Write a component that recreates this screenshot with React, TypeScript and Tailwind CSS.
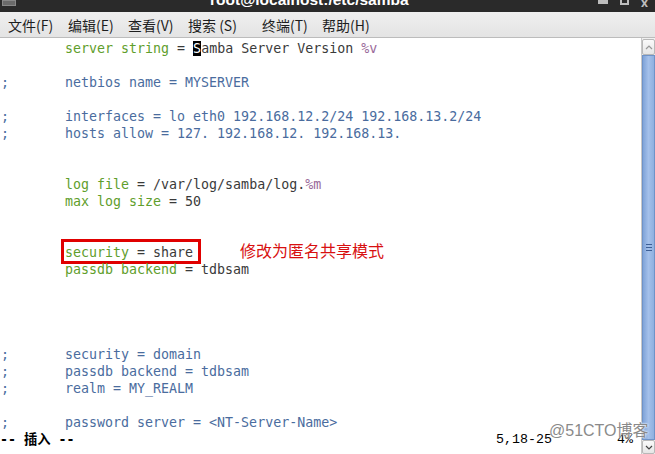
import React from "react";

const G = "text-[#5f9e2c]"; // green keys
const B = "text-[#4a6c9e]"; // blue comments
const D = "text-[#3a3a3a]"; // dark values
const P = "text-[#9a6a9a]"; // purple macros

type Seg = [string, string];
type Line = { semi?: boolean; segs?: Seg[]; box?: boolean };

const lines: Line[] = [
  { segs: [["server string", G], [" = ", D], ["CURSOR", D], ["amba Server Version ", D], ["%v", P]] },
  {},
  { semi: true, segs: [["netbios name = MYSERVER", B]] },
  {},
  { semi: true, segs: [["interfaces = lo eth0 192.168.12.2/24 192.168.13.2/24", B]] },
  { semi: true, segs: [["hosts allow = 127. 192.168.12. 192.168.13.", B]] },
  {},
  {},
  { segs: [["log file", G], [" = /var/log/samba/log.", D], ["%m", P]] },
  { segs: [["max log size", G], [" = 50", D]] },
  {},
  {},
  { box: true, segs: [["security", G], [" = share", D]] },
  { segs: [["passdb backend", G], [" = tdbsam", D]] },
  {},
  {},
  {},
  {},
  { semi: true, segs: [["security = domain", B]] },
  { semi: true, segs: [["passdb backend = tdbsam", B]] },
  { semi: true, segs: [["realm = MY_REALM", B]] },
  {},
  { semi: true, segs: [["password server = <NT-Server-Name>", B]] },
];

const menus = ["文件(F)", "编辑(E)", "查看(V)", "搜索 (S)", "终端(T)", "帮助(H)"];
const menuX = [8, 68, 128, 188, 262, 322];

export default function App() {
  return (
    <div className="relative w-[655px] h-[454px] overflow-hidden bg-white flex flex-col">
      {/* title bar */}
      <div className="relative h-[12px] bg-[#2a2a2a] overflow-hidden shrink-0">
        <div className="absolute left-[2px] top-0 w-[14px] h-[6px] bg-[#6a6a6a] border border-[#888]" />
        <div
          className="absolute left-[210px] top-[-10px] text-white font-bold text-[15.5px] leading-[20px] whitespace-nowrap"
          style={{ fontFamily: '"Liberation Sans", sans-serif' }}
        >
          root@localhost:/etc/samba
        </div>
        <div className="absolute left-[598px] top-0 w-[10px] h-[4px] bg-[#bdbdbd]" />
        <div className="absolute left-[620px] top-[-4px] w-[9px] h-[9px] border-2 border-[#bdbdbd]" />
        <div className="absolute left-[641px] top-[-2px] text-[#bdbdbd] text-[12px] leading-[10px] font-bold">x</div>
      </div>
      {/* menu bar */}
      <div
        className="relative h-[26px] shrink-0 bg-gradient-to-b from-[#efefef] to-[#e4e4e4] border-b border-[#bcbcbc] text-[14px] text-[#1e1e1e]"
        style={{ fontFamily: '"Noto Sans CJK SC", "DejaVu Sans", sans-serif' }}
      >
        {menus.map((m, i) => (
          <span key={m} className="absolute top-[3px] leading-[20px] whitespace-nowrap" style={{ left: menuX[i] }}>
            {m}
          </span>
        ))}
      </div>
      {/* body */}
      <div className="flex flex-1 min-h-0">
        <div
          className="relative flex-1 pt-[2px] text-[13.3px] leading-[17px] whitespace-pre"
          style={{ fontFamily: '"DejaVu Sans Mono", monospace' }}
        >
          {lines.map((l, i) => (
            <div key={i} className="relative h-[17px] flex">
              <span className={`w-[65px] shrink-0 pl-[1px] ${B}`}>{l.semi ? ";" : ""}</span>
              <span className="relative">
                {l.segs?.map(([t, c], j) =>
                  t === "CURSOR" ? (
                    <span key={j} className="bg-black text-white">S</span>
                  ) : (
                    <span key={j} className={c}>{t}</span>
                  )
                )}
                {l.box && (
                  <span className="absolute left-[-4px] top-[-5px] w-[140px] h-[25px] border-[3px] border-[#e00000]" />
                )}
              </span>
              {l.box && (
                <span
                  className="absolute left-[240px] top-[-4px] text-[16px] leading-[20px] text-[#d81010]"
                  style={{ fontFamily: '"Noto Sans CJK SC", sans-serif' }}
                >
                  修改为匿名共享模式
                </span>
              )}
            </div>
          ))}
          {/* status line */}
          <div className="flex h-[17px] text-black">
            <span className="w-[496px] shrink-0 font-bold" style={{ fontFamily: '"DejaVu Sans Mono", "Noto Sans CJK SC", monospace' }}>
              -- 插入 --
            </span>
            <span className="w-[121px] shrink-0" style={{ fontFamily: '"Liberation Mono", monospace' }}>5,18-25</span>
            <span style={{ fontFamily: '"Liberation Mono", monospace' }}>4%</span>
          </div>
        </div>
        {/* scrollbar */}
        <div className="w-[14px] shrink-0 flex flex-col border-l border-[#c8c8c8] bg-[#f0f0f0]">
          <div className="h-[16px] mt-[1px] shrink-0 bg-gradient-to-b from-[#fafafa] to-[#e6e6e6] border border-[#b8b8b8] rounded-[2px] flex items-center justify-center text-[#888]">
            <svg width="8" height="5" viewBox="0 0 8 5"><path d="M1 4 L4 1 L7 4" fill="none" stroke="#999" strokeWidth="1.2" /></svg>
          </div>
          <div className="flex-1 bg-gradient-to-r from-[#7fa3d8] via-[#a4c0ea] to-[#8fb0e0] border border-[#6f93c8] flex items-center justify-center">
            <div className="flex flex-col gap-[2px]">
              <div className="w-[6px] h-[1px] bg-[#3d5f96]" />
              <div className="w-[6px] h-[1px] bg-[#3d5f96]" />
              <div className="w-[6px] h-[1px] bg-[#3d5f96]" />
            </div>
          </div>
          <div className="h-[14px] shrink-0 bg-gradient-to-b from-[#fafafa] to-[#e6e6e6] border border-[#b8b8b8] rounded-[2px] flex items-center justify-center">
            <svg width="8" height="5" viewBox="0 0 8 5"><path d="M1 1 L4 4 L7 1" fill="none" stroke="#444" strokeWidth="1.2" /></svg>
          </div>
        </div>
      </div>
      {/* watermark */}
      <div
        className="absolute left-[549px] top-[421px] text-[16px] leading-[20px] text-[#8a8a8a] whitespace-nowrap"
        style={{ fontFamily: '"Liberation Sans", "Noto Sans CJK SC", sans-serif', textShadow: "0 0 2px #fff, 0 0 2px #fff" }}
      >
        @51CTO博客
      </div>
    </div>
  );
}
